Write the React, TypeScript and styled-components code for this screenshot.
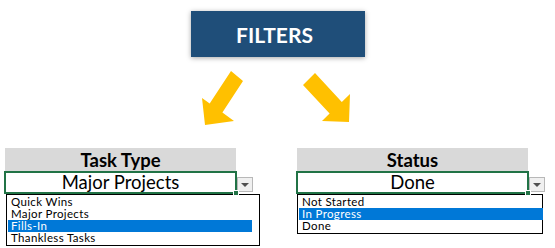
import React from "react";
import styled, { createGlobalStyle } from "styled-components";

const GlobalStyle = createGlobalStyle`
  body {
    margin: 0;
    background: #ffffff;
    font-family: Lato, "Open Sans", sans-serif;
  }
`;

interface iFilter {
  title: string;
  value: string;
  options: Array<string>;
  highlighted: number;
  listWidth: number;
  listOffset: number;
}

const filters: Array<iFilter> = [
  {
    title: "Task Type",
    value: "Major Projects",
    options: ["Quick Wins", "Major Projects", "Fills-In", "Thankless Tasks"],
    highlighted: 2,
    listWidth: 254,
    listOffset: 2,
  },
  {
    title: "Status",
    value: "Done",
    options: ["Not Started", "In Progress", "Done"],
    highlighted: 1,
    listWidth: 246,
    listOffset: 1,
  },
];

const Page = styled.div`
  width: 555px;
  height: 248px;
  display: flex;
  flex-direction: column;
  align-items: center;
  overflow: hidden;
`;

const FiltersBox = styled.div`
  margin-top: 11px;
  width: 174px;
  height: 46px;
  padding-right: 6px;
  box-sizing: border-box;
  background: #1f4e79;
  color: #ffffff;
  font-size: 21px;
  font-weight: 700;
  display: flex;
  align-items: center;
  justify-content: center;
  box-shadow: 0 1px 5px rgba(0, 0, 0, 0.35);
`;

const Arrows = styled.svg`
  display: block;
  width: 555px;
  height: 91px;
`;

const Panels = styled.div`
  align-self: stretch;
  display: flex;
  gap: 36px;
  padding-left: 4px;
`;

const Panel = styled.div`
  display: flex;
  flex-direction: column;
`;

const Header = styled.div`
  margin-left: 1px;
  width: 231px;
  height: 23px;
  background: #d9d9d9;
  font-size: 18.5px;
  font-weight: 700;
  color: #000;
  display: flex;
  align-items: flex-end;
  justify-content: center;
  line-height: 22px;
`;

const CellRow = styled.div`
  display: flex;
  align-items: flex-end;
`;

const Cell = styled.div`
  position: relative;
  box-sizing: border-box;
  width: 233px;
  height: 23px;
  border: 2px solid #217346;
  font-size: 18.5px;
  color: #000;
  display: flex;
  align-items: center;
  justify-content: center;
  line-height: 19px;
`;

const Handle = styled.span`
  position: absolute;
  right: -4px;
  bottom: -4px;
  width: 4px;
  height: 4px;
  background: #217346;
  border: 1px solid #ffffff;
`;

const DropButton = styled.div`
  box-sizing: border-box;
  width: 16px;
  height: 15px;
  margin-bottom: 2px;
  background: #f0f0f0;
  border: 1px solid #b8b8b8;
  display: flex;
  align-items: center;
  justify-content: center;
`;

const Caret = styled.span`
  width: 0;
  height: 0;
  border-left: 4px solid transparent;
  border-right: 4px solid transparent;
  border-top: 4px solid #505050;
`;

const List = styled.div<{ $width: number; $offset: number }>`
  box-sizing: border-box;
  width: ${(p) => p.$width}px;
  margin-left: ${(p) => p.$offset}px;
  border: 1px solid #000;
  padding: 1px 0 1px 1px;
`;

const Item = styled.div<{ $selected: boolean }>`
  width: 244px;
  height: 12px;
  line-height: 12px;
  padding-left: 3px;
  box-sizing: border-box;
  font-size: 11.5px;
  letter-spacing: 0.35px;
  color: ${(p) => (p.$selected ? "#ffffff" : "#000")};
  background: ${(p) => (p.$selected ? "#0078d7" : "transparent")};
  white-space: nowrap;
`;

const FilterPanel: React.FC<{ filter: iFilter }> = ({ filter }) => {
  return (
    <Panel>
      <Header>{filter.title}</Header>
      <CellRow>
        <Cell>
          {filter.value}
          <Handle />
        </Cell>
        <DropButton>
          <Caret />
        </DropButton>
      </CellRow>
      <List $width={filter.listWidth} $offset={filter.listOffset}>
        {filter.options.map((option: string, index: number) => (
          <Item key={index} $selected={index === filter.highlighted}>
            {option}
          </Item>
        ))}
      </List>
    </Panel>
  );
};

const App: React.FC = () => {
  return (
    <Page>
      <GlobalStyle />
      <FiltersBox>FILTERS</FiltersBox>
      <Arrows viewBox="0 57 555 91">
        <polygon
          fill="#ffc000"
          points="231,71 243,81 222.4,112.6 234,121 205,125 202,98 209.7,103.6"
        />
        <polygon
          fill="#ffc000"
          points="315,73 341.8,101.9 350,94 349,122 322,121 329.6,113.6 303,85"
        />
      </Arrows>
      <Panels>
        {filters.map((filter: iFilter, index: number) => (
          <FilterPanel key={index} filter={filter} />
        ))}
      </Panels>
    </Page>
  );
};

export default App;
